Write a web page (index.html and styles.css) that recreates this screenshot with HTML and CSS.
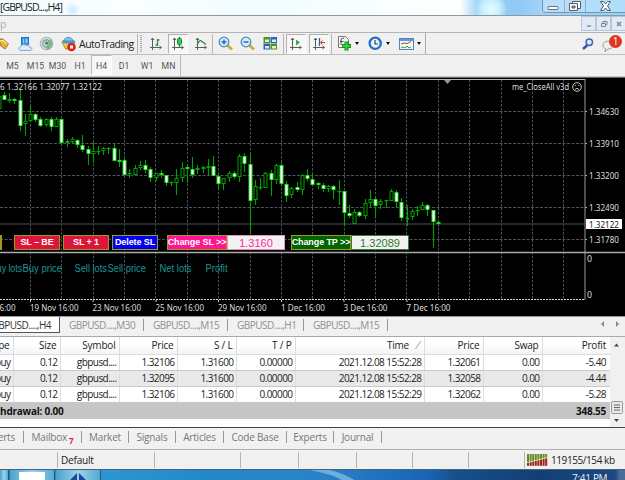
FILE: index.html
```html
<!DOCTYPE html>
<html lang="en">
<head>
  <meta charset="UTF-8">
  <meta name="viewport" content="width=device-width, initial-scale=1.0">
  <title>GBPUSD....,H4</title>
  <link rel="stylesheet" href="styles.css">
</head>
<body>

  <div class="titlebar">
    <span class="title">[GBPUSD....,H4]</span>
    <div class="window-buttons">
      <span><svg width="12" height="12"><rect x="1" y="3.5" width="10" height="3" rx="1" fill="#fff" stroke="#666b78"/></svg></span>
      <span><svg width="14" height="12"><path d="M4.500.500h8v7h-8z" fill="#fff" stroke="#555b68"/><path d="M1.500 2.500h8v7h-8z" fill="#fff" stroke="#555b68"/><path d="M4 5h3v2H4z" fill="#9ac" stroke="#555b68"/></svg></span>
      <span class="close"><svg width="13" height="12"><path d="M1.500.500h3l2 2.500 2-2.500h3L8.500 5l3 4.500h-3l-2-2.500-2 2.500h-3L4.500 5z" fill="#fff" stroke="#555b68"/></svg></span>
    </div>
  </div>

  <div class="menubar">
    <span class="menu-item">p</span>
    <div class="mdi-buttons">
      <span><svg width="8" height="8"><path d="M2 6h4" stroke="#74859b" stroke-width="1.300"/></svg></span>
      <span><svg width="8" height="8"><path d="M3 3V1.500h4v3H5.500M1.500 3.500h4v3h-4z" fill="none" stroke="#74859b"/></svg></span>
      <span><svg width="8" height="8"><path d="M2 2l4 4M6 2l-4 4" stroke="#74859b" stroke-width="1.400"/></svg></span>
    </div>
  </div>

  <div class="toolbar">
    <div class="tools">
      <svg class="icon gold" width="9" height="16"><path d="M0 3l3 0 5.500 5L5 13 0 9z" fill="#e9b03a" stroke="#a8741b"/><path d="M0 5l3-.5L7 8" fill="none" stroke="#ffe493" stroke-width="1.500"/></svg>
      <svg class="icon cloud" width="15" height="16"><rect x="3.500" y="1.500" width="7" height="8" fill="#2f96e3" stroke="#2878c1"/><path d="M5 4h1M7.500 4h2M5 6h1M7.500 6h2" stroke="#fff"/><path d="M3 14.500C0 14.500.500 10.500 3 10.500 4 8 7 8 8 9.500c2-1 3.500 0 3.500 1.500 3 0 3 3.500.5 3.500z" fill="#dce9f8" stroke="#84a6d6"/></svg>
      <svg class="icon signal" width="16" height="16"><circle cx="7.500" cy="7.500" r="6.300" fill="#d5dde2" stroke="#9db0ba"/><circle cx="7.500" cy="7.500" r="3.700" fill="none" stroke="#7394a5" stroke-width="1.200"/><path d="M7.500 7.500v6.500c4 0 6-3 6-6.500 0-2-1-4-2-4.500" fill="#76b37d" opacity=".8"/><circle cx="7.500" cy="7" r="1.600" fill="#2b9b3c"/></svg>
      <svg class="icon auto" width="17" height="16"><path d="M1 6l3.500 7 7 0L14 6z" fill="#f3c748" stroke="#bb8d20"/><ellipse cx="7.500" cy="5.500" rx="6.800" ry="2.200" fill="#4b9cd0"/><path d="M3 5c0-5 8.500-5 9 0z" fill="#7cc2ea" stroke="#3a86b8" stroke-width=".7"/><circle cx="10.500" cy="11" r="4.300" fill="#d92417"/><rect x="9" y="9.500" width="3" height="3" fill="#fff"/></svg>
      <span class="auto-label">AutoTrading</span>
      <i class="sep s1"></i><i class="grip"></i>
      <span class="tool t1"><svg width="14" height="14"><path class="ax" d="M3.500 1v12M1 10.500h11M2 3l1.500-2L5 3M10.500 9l2 1.500-2 1.500"/><path class="gr" d="M8.500 2v7M8.500 3h2M6.500 8h2"/></svg></span>
      <span class="tool t2 on"><svg width="14" height="14"><path class="ax" d="M3.500 1v12M1 10.500h11M2 3l1.500-2L5 3M10.500 9l2 1.500-2 1.500"/><path class="gr" d="M8.500 0v10"/><rect x="6.500" y="1.500" width="4" height="6" rx="1" fill="#2ecf4a" stroke="#168a2b"/></svg></span>
      <span class="tool t3"><svg width="14" height="14"><path class="ax" d="M3.500 1v12M1 10.500h11M2 3l1.500-2L5 3M10.500 9l2 1.500-2 1.500"/><path class="gr" d="M3 8c2-5 4-5 5-3.500l4 3"/></svg></span>
      <i class="sep s2"></i>
      <svg class="icon zin" width="16" height="16"><path d="M9 9l5 4.500" stroke="#d8a934" stroke-width="3"/><circle cx="6" cy="6" r="4.800" fill="#d5ecfb" stroke="#4b8cc9" stroke-width="1.300"/><path d="M3.500 6h5M6 3.500v5" stroke="#276fab" stroke-width="1.500"/></svg>
      <svg class="icon zout" width="16" height="16"><path d="M9 9l5 4.500" stroke="#d8a934" stroke-width="3"/><circle cx="6" cy="6" r="4.800" fill="#d5ecfb" stroke="#4b8cc9" stroke-width="1.300"/><path d="M3.500 6h5" stroke="#276fab" stroke-width="1.500"/></svg>
      <svg class="icon tile" width="15" height="15"><path d="M.5 1h6.500v6H.5zM7.500 7.500H14v6H7.500z" fill="#459721"/><path d="M7.500 1H14v6H7.500zM.5 7.500H7v6H.5z" fill="#2c63bd"/><path d="M2 3.500h4v2.500H2zM9 3.500h4v2.500H9zM2 10h4v2.500H2zM9 10h4v2.500H9z" fill="#e3f1dc"/></svg>
      <i class="sep s3"></i>
      <span class="tool t4 on"><svg width="14" height="14"><path class="ax" d="M3.500 1v12M1 10.500h11M2 3l1.500-2L5 3M10.500 9l2 1.500-2 1.500"/><path d="M7 2.500l4 3-4 3z" fill="#27b63f"/></svg></span>
      <span class="tool t5 on"><svg width="14" height="14"><path class="ax" d="M3.500 1v12M1 10.500h11M2 3l1.500-2L5 3M10.500 9l2 1.500-2 1.500"/><path d="M7.500 1v8" stroke="#2f6590" stroke-width="1.300"/><path d="M13 5.500H9M10.500 3.500l-2 2 2 2" fill="none" stroke="#c54120"/></svg></span>
      <i class="sep s4"></i>
      <svg class="icon newchart" width="15" height="17"><path d="M1.500 1.500h7l3 3v8h-10z" fill="#fafafa" stroke="#777"/><path d="M4 10V5c0-2 2-2 3-1.500M3 6.500h3.500" fill="none" stroke="#444"/><path d="M9.500 6.500v9M5 11h9" stroke="#168a1b" stroke-width="4"/><path d="M9.500 7.300v7.400M5.800 11h7.400" stroke="#35d23a" stroke-width="2"/></svg>
      <i class="arrow"></i>
      <svg class="icon clock" width="15" height="15"><circle cx="7.200" cy="7.300" r="5.600" fill="#e8f3fc" stroke="#2471c4" stroke-width="2.300"/><path d="M7 4v4h3" fill="none" stroke="#345" stroke-width="1.200"/></svg>
      <i class="arrow"></i>
      <svg class="icon tmpl" width="15" height="14"><rect x=".5" y="1.500" width="14" height="11" fill="#f4f8fb" stroke="#4d86bb"/><path d="M1 3h13" stroke="#5d9bd5" stroke-width="2"/><path d="M2 7l3-1 3 .5 4-2" fill="none" stroke="#b54729"/><path d="M2 11l2-1 2 1 2-2 2 2 2-1" fill="none" stroke="#3e9643"/></svg>
      <i class="arrow"></i>
    </div>
    <svg class="icon search" width="12" height="13"><path d="M5.500 7L1 11" stroke="#3457a5" stroke-width="2.500"/><circle cx="7.300" cy="4.300" r="3.200" fill="#dcebfa" stroke="#3d66b5" stroke-width="1.500"/></svg>
    <div class="alerts">
      <svg width="12" height="13"><path d="M1 5c0-5 10-5 10 0 0 3-3 4-5 4l-3 3 .5-3.500C2 8 1 7 1 5z" fill="#eee" stroke="#999"/></svg>
      <span class="badge">1</span>
    </div>
  </div>

  <div class="periods">
    <span class="m5">M5</span><span class="m15">M15</span><span class="m30">M30</span><span class="h1">H1</span><span class="h4 active">H4</span><span class="d1">D1</span><span class="w1">W1</span><span class="mn">MN</span>
  </div>

  <div class="chart-wrap">
    <svg id="chart" class="chart" width="625" height="240" viewBox="0 76 625 240"></svg>
    <div class="trade-buttons">
      <button class="stub"></button>
      <button class="red">SL – BE</button>
      <button class="red">SL + 1</button>
      <button class="blue">Delete SL</button>
      <button class="pink">Change SL &gt;&gt;</button>
      <span class="field pink-field">1.3160</span>
      <button class="green">Change TP &gt;&gt;</button>
      <span class="field green-field">1.32089</span>
    </div>
  </div>

  <div class="chart-tabs">
    <span class="tab active">GBPUSD....,H4</span>
    <span class="tab">GBPUSD....,M30</span>
    <span class="tab">GBPUSD....,M15</span>
    <span class="tab short">GBPUSD....,H1</span>
    <span class="tab">GBPUSD....,M15</span>
    <svg class="tab-scroll" width="20" height="8"><path d="M4 1v6L1 4zM16 1v6l3-3z" fill="#888"/></svg>
  </div>

  <div class="terminal">
    <table class="orders">
      <colgroup><col class="c-type"><col class="c-size"><col class="c-symbol"><col class="c-price"><col class="c-sl"><col class="c-tp"><col class="c-time"><col class="c-now"><col class="c-swap"><col class="c-profit"></colgroup>
      <thead>
        <tr><th>Type</th><th>Size</th><th>Symbol</th><th>Price</th><th>S / L</th><th>T / P</th><th class="time">Time <i>⁄</i></th><th>Price</th><th>Swap</th><th>Profit</th></tr>
      </thead>
      <tbody>
        <tr><td>buy</td><td>0.12</td><td>gbpusd....</td><td>1.32106</td><td>1.31600</td><td>0.00000</td><td>2021.12.08 15:52:28</td><td>1.32061</td><td>0.00</td><td>-5.40</td></tr>
        <tr class="odd"><td>buy</td><td>0.12</td><td>gbpusd....</td><td>1.32095</td><td>1.31600</td><td>0.00000</td><td>2021.12.08 15:52:28</td><td>1.32058</td><td>0.00</td><td>-4.44</td></tr>
        <tr><td>buy</td><td>0.12</td><td>gbpusd....</td><td>1.32106</td><td>1.31600</td><td>0.00000</td><td>2021.12.08 15:52:29</td><td>1.32062</td><td>0.00</td><td>-5.28</td></tr>
        <tr class="total"><td colspan="9"><span>thdrawal: 0.00</span></td><td>348.55</td></tr>
      </tbody>
    </table>
    <div class="scrollbar">
      <svg width="15" height="91"><path d="M4 9.500h5L6.500 6.500z" fill="#444"/><rect x="1.500" y="64.500" width="11" height="12" rx="1" fill="#e8e8e8" stroke="#999"/><path d="M4 68h6M4 70.500h6M4 73h6" stroke="#666"/><path d="M4 82h5l-2.500 3z" fill="#444"/></svg>
    </div>
  </div>

  <div class="terminal-tabs">
    <span class="alerts-tab">Alerts</span><span class="mail">Mailbox<sub>7</sub></span><span class="market">Market</span><span class="signals">Signals</span><span class="articles">Articles</span><span class="code">Code Base</span><span class="experts">Experts</span><span class="journal">Journal</span>
  </div>

  <div class="statusbar">
    <span class="st-a"></span><span class="st-b">Default</span><span class="st-c"></span><span class="st-d"></span><span class="st-d"></span><span class="st-e"></span><span class="st-e"></span><span class="st-f"></span>
    <div class="traffic">
      <svg id="bars" width="21" height="12"></svg>
      <span>119155/154 kb</span>
    </div>
  </div>

  <div class="taskbar">
    <span class="task first"></span>
    <span class="task"><i class="doc"></i></span>
    <span class="task"><svg width="20" height="8"><path d="M9 0v8H1zM11 0v8h8z" fill="#174a9c"/></svg></span>
    <svg class="wave" width="467" height="10"><path d="M202 -1Q232 4 241 11L254 11Q240 2 222 -1z" fill="#8fc0ea" opacity=".7"/></svg>
    <span class="time-now">7:41 PM</span>
  </div>

  <script src="chart.js"></script>
</body>
</html>
```

FILE: styles.css
```css
* {
  box-sizing: border-box;
}
body {
  margin: 0;
  width: 625px;
  height: 480px;
  overflow: hidden;
  background: #f0f0f0;
  font-family: "Open Sans", "Noto Sans", sans-serif;
  font-size: 10.5px;
  color: #222;
}
svg {
  display: block;
  flex: none;
}

/* title and menu */
.titlebar {
  display: flex;
  justify-content: space-between;
  height: 15px;
  background:
    radial-gradient(circle at 491px 9px, #e4fbff 0, #c7efff 9px, transparent 16px),
    radial-gradient(circle at 73px 10px, #cdeafd 0, transparent 8px),
    linear-gradient(90deg, #f3fcff 0, #fafeff 130px, #f0fdff 260px, #fff 460px, #a4d5f8 477px, #8fc9f5 515px, #a3d3fa 545px, #8ed4f7 625px);
}
.title {
  font-size: 10.5px;
  line-height: 14px;
  letter-spacing: -0.95px;
}
.window-buttons {
  display: flex;
  width: 83px;
  height: 13px;
  border: 1px solid #7495b4;
  border-top: 0;
  border-right: 0;
  border-radius: 0 0 0 4px;
}
.window-buttons span {
  display: flex;
  justify-content: center;
  width: 22px;
  padding-top: 1px;
  border-right: 1px solid #8fb0cd;
  background: rgba(220, 240, 255, 0.4);
}
.window-buttons span:first-child {
  padding-top: 3px;
}
.window-buttons .close {
  width: 39px;
  border: 0;
}
.menubar {
  display: flex;
  justify-content: space-between;
  height: 17px;
  border-top: 1px solid #8f979b;
  background: #f1f1f1;
}
.menu-item {
  color: #aaa;
  font-size: 10.5px;
  line-height: 16px;
}
.mdi-buttons {
  display: flex;
  width: 44px;
}
.mdi-buttons span {
  display: flex;
  align-items: center;
  justify-content: center;
  flex: none;
  width: 15px;
  height: 15px;
  border: 1px solid #b6c6d8;
  background: #dfeaf6;
}

/* toolbars */
.toolbar {
  display: flex;
  height: 23px;
  border-top: 1px solid #b4b4b4;
  border-bottom: 1px solid #bdbdbd;
}
.tools {
  display: flex;
  align-items: center;
  flex: none;
  width: 426px;
  height: 21px;
  border-right: 1px solid #aaa;
}
.cloud { margin-left: 9px; }
.signal { margin-left: 6px; }
.auto { margin-left: 6px; }
.auto-label {
  flex: none;
  width: 58px;
  margin-left: 1px;
  font-size: 10.5px;
  letter-spacing: -0.5px;
  white-space: nowrap;
}
.sep {
  flex: none;
  width: 1px;
  height: 20px;
  background: #b5b5b5;
}
.grip {
  flex: none;
  width: 2px;
  height: 18px;
  margin: 0 4px 0 2px;
  background: repeating-linear-gradient(#aaa 0 1px, #eee 1px 2px);
}
.tool {
  display: flex;
  align-items: center;
  justify-content: center;
  flex: none;
  width: 20px;
  height: 20px;
}
.tool.on {
  border: 1px solid #b1b1b1;
  border-right-color: #fff;
  border-bottom-color: #fff;
  background: #f7f7f7;
}
.t2 { margin-left: 2px; }
.t3 { margin-left: 3px; }
.t5 { margin-left: 3px; }
.ax {
  fill: none;
  stroke: #5c5c5c;
}
.gr {
  fill: none;
  stroke: #2d8c45;
  stroke-width: 1.3;
}
.s2 { margin-left: 1px; }
.zin { margin-left: 5px; }
.zout { margin-left: 6px; }
.tile { margin-left: 7px; }
.s3 { margin: 0 2px 0 5px; }
.s4 { margin: 0 5px 0 2px; }
.arrow {
  flex: none;
  width: 0;
  margin: 0 9px 0 3px;
  border: 2.5px solid transparent;
  border-top: 3px solid #111;
  border-bottom: 0;
}
.tmpl + .arrow { margin-right: 0; }
.search { margin: 5px 0 0 156px; }
.alerts {
  position: relative;
  margin: 7px 0 0 8px;
}
.badge {
  position: absolute;
  left: 7px;
  top: -5px;
  width: 13px;
  height: 13px;
  border-radius: 50%;
  background: #dc3520;
  color: #fff;
  font-size: 10px;
  line-height: 13px;
  text-align: center;
}
.periods {
  display: flex;
  width: 181px;
  height: 21px;
  border-right: 1px solid #bbb;
  font-family: Roboto, sans-serif;
  font-size: 8.7px;
  line-height: 22px;
  color: #555;
  text-align: center;
}
.periods span { flex: none; }
.m5 { width: 25px; }
.m15 { width: 21px; }
.m30 { width: 23px; }
.h1 { width: 22px; }
.h4 { width: 21px; }
.d1 { width: 24px; }
.w1 { width: 22px; }
.mn { width: 21px; }
.periods .active {
  height: 20px;
  border: 1px solid #bbb;
  border-right-color: #fff;
  border-bottom-color: #fff;
  background: #f8f8f8;
  line-height: 20px;
}

/* chart */
.chart-wrap {
  position: relative;
  height: 240px;
  background: #000;
}
.chart text {
  font-family: "Noto Sans", sans-serif;
  font-size: 9px;
  fill: #ddd;
}
.chart .teal {
  font-family: "Liberation Sans", sans-serif;
  font-size: 10px;
  fill: #1f9595;
}
.chart .now { fill: #111; }
.trade-buttons {
  position: absolute;
  left: 0;
  top: 159px;
  display: flex;
  height: 15px;
}
.trade-buttons button {
  flex: none;
  display: flex;
  align-items: center;
  justify-content: center;
  height: 15px;
  padding: 0;
  border: 1px solid #a09a18;
  color: #fff;
  font: 9px/13px "Liberation Sans", sans-serif;
  font-weight: bold;
  letter-spacing: -0.1px;
  white-space: nowrap;
  overflow: hidden;
}
.trade-buttons .stub { width: 1px; margin-right: 12px; }
.trade-buttons .red { width: 46px; margin-right: 3px; background: #dc143c; }
.trade-buttons .blue { width: 46px; margin-right: 9px; background: #0000f5; }
.trade-buttons .pink { width: 60px; background: #ff1493; }
.trade-buttons .green { width: 60px; margin-left: 6px; background: #006400; }
.field {
  width: 58px;
  border: 1px solid #f08cc4;
  background: #f2f2f2;
  font: 11px/14px "Liberation Sans", sans-serif;
  text-align: center;
}
.pink-field { color: #ff2a9d; }
.green-field { border-color: #3c7d3c; color: #2e7a2e; }

/* chart tabs */
.chart-tabs {
  display: flex;
  align-items: flex-start;
  height: 20px;
  border-top: 1px solid #999;
  background: #f1f1f1;
}
.tab {
  flex: none;
  position: relative;
  width: 84px;
  padding-left: 9px;
  color: #909090;
  font-size: 10px;
  line-height: 16px;
  letter-spacing: -0.5px;
  white-space: nowrap;
}
.tab:not(.active)::after {
  content: "";
  position: absolute;
  right: 0;
  top: 2px;
  width: 1px;
  height: 12px;
  background: #999;
}
.tab.short { width: 76px; }
.tab.active {
  display: flex;
  justify-content: flex-end;
  width: 60px;
  height: 16px;
  padding: 0 8px 0 0;
  border-right: 1px solid #555;
  border-bottom: 1px solid #555;
  background: #fff;
  color: #333;
}
.tab-scroll { margin: 3px 5px 0 auto; }

/* terminal */
.terminal {
  display: flex;
  height: 92px;
  background: #fff;
  border-top: 1px solid #aaa;
  border-bottom: 1px solid #444;
}
.orders {
  width: 610px;
  height: 82px;
  table-layout: fixed;
  border-collapse: collapse;
  font-size: 10px;
  letter-spacing: -0.55px;
  line-height: 15px;
}
.c-type { width: 13px; }
.c-size { width: 47px; }
.c-symbol { width: 59px; }
.c-price { width: 58px; }
.c-sl { width: 59px; }
.c-tp { width: 59px; }
.c-time { width: 129px; }
.c-now { width: 59px; }
.c-swap { width: 59px; }
.c-profit { width: 68px; }
.orders th, .orders td {
  height: 16px;
  padding: 0 2px 0 0;
  border-right: 1px solid #ddd;
  border-bottom: 1px solid #c8c8c8;
  font-weight: normal;
  text-align: right;
  white-space: nowrap;
}
.orders th {
  height: 17px;
  padding-right: 3px;
  background: linear-gradient(#fff 40%, #f2f4f6);
  border-bottom-color: #ddd;
  letter-spacing: -0.2px;
}
.orders td:first-child, .orders th:first-child {
  direction: rtl;
  overflow: hidden;
}
.orders th:last-child, .orders td:last-child {
  padding-right: 4px;
  border-right: 0;
}
.orders .time { padding-right: 5px; }
.orders .time i { color: #888; margin-left: 6px; }
.orders .odd { background: #e9e9e9; }
.orders .total td {
  background: #c6c6c6;
  border: 0;
  font-weight: bold;
  letter-spacing: -0.25px;
  color: #111;
}
.orders .total td:first-child {
  direction: ltr;
  text-align: left;
}
.total span { margin-left: -4px; }
.scrollbar {
  width: 15px;
  background: #f0f0f0;
}
.terminal-tabs {
  display: flex;
  align-items: center;
  height: 18px;
  margin-bottom: 3px;
  background: #f1f1f1;
  color: #777;
  font-size: 10px;
  letter-spacing: -0.2px;
  line-height: 12px;
  white-space: nowrap;
}
.terminal-tabs span {
  flex: none;
  height: 12px;
  border-right: 1px solid #999;
  text-align: center;
}
.terminal-tabs .alerts-tab {
  display: flex;
  justify-content: flex-end;
  width: 24px;
  padding-right: 8px;
}
.mail { width: 58px; }
.mail sub {
  margin-left: 2px;
  color: #e02030;
  font-size: 8px;
  font-weight: bold;
  line-height: 0;
}
.market { width: 47px; }
.signals { width: 47px; }
.articles { width: 48px; }
.code { width: 63px; }
.experts { width: 47px; }
.journal { width: 48px; }
.statusbar {
  display: flex;
  height: 20px;
  padding-top: 2px;
  border-top: 1px solid #b2b2b2;
  background: #f0f0f0;
  font-size: 10px;
  line-height: 17px;
  letter-spacing: -0.2px;
}
.statusbar > span {
  flex: none;
  height: 16px;
  border-right: 1px solid #b5b5b5;
}
.st-a { width: 58px; }
.st-b { width: 97px; padding-left: 3px; }
.st-c { width: 86px; }
.st-d { width: 58px; }
.st-e { width: 56px; }
.st-f { width: 56px; }
.traffic {
  display: flex;
  align-items: center;
  gap: 3px;
  padding-left: 2px;
  height: 16px;
  white-space: nowrap;
  letter-spacing: -0.42px;
}

/* taskbar */
.taskbar {
  display: flex;
  height: 11px;
  border-top: 1px solid #42667e;
  background: linear-gradient(90deg, #2675b8 0, #2f95ce 110px, #2389c8 200px, #2a82c8 320px, #1963b3 430px, #174f8b 455px, #123f73 540px, #1b4980 615px, #4a6e98 620px);
}
.task {
  display: flex;
  justify-content: center;
  flex: none;
  width: 45px;
  margin-right: 1px;
  border-right: 1px solid #235a7e;
  background: linear-gradient(90deg, #4ba3cc, #9ad2e7 50%, #56a9d2);
}
.task.first { width: 9px; }
.task svg { margin-top: 3px; }
.doc {
  width: 26px;
  margin-top: 2px;
  background: #fff;
}
.time-now {
  margin-left: 3px;
  color: #e8eef5;
  font-size: 10px;
  line-height: 17px;
  letter-spacing: -0.3px;
  white-space: nowrap;
}
```

FILE: chart.js
```js
const svg = document.getElementById('chart');
let out = '';

function line(x1, y1, x2, y2, color, extra = '') {
  out += `<path d="M${x1} ${y1}L${x2} ${y2}" stroke="${color}" ${extra}/>`;
}
function label(text, x, y, width, cls = '') {
  out += `<text x="${x}" y="${y}" textLength="${width}" lengthAdjust="spacingAndGlyphs" class="${cls}">${text}</text>`;
}

// grid
out += '<rect x="0" y="76" width="625" height="1.5" fill="#c5c8c8"/>';
for (let i = 0; i < 18; i++) {
  const x = Math.round(30 + i * 31.37) + 0.5;
  line(x, 80, x, 299, '#4a535e', 'stroke-dasharray="2.5 1.5"');
}
[111.5, 143.5, 175.5, 207.5, 239.5].forEach(y => line(0, y, 584, y, '#4a535e', 'stroke-dasharray="3 1.5"'));
line(0, 224, 584, 224, '#30383d', 'stroke-width="1.6"');

// high, body top, body bottom, low, w = white body / g = hollow
const candles = [
  [95, 96, 109, 109, 'g'], [92, 95, 100, 100, 'w'], [93, 99, 101, 103, 'g'], [98, 99, 101, 104, 'w'],
  [90, 100, 126, 131, 'w'], [114, 121, 124, 136, 'g'], [106, 114, 121, 122, 'g'], [113, 114, 120, 122, 'w'],
  [117, 119, 126, 127, 'w'], [118, 119, 125, 127, 'g'], [117, 119, 127, 131, 'w'], [117, 119, 127, 127, 'g'],
  [119, 119, 143, 144, 'w'], [139, 141, 143, 147, 'g'], [137, 139, 142, 144, 'g'], [139, 140, 145, 148, 'w'],
  [135, 145, 150, 152, 'w'], [146, 149, 154, 165, 'w'], [142, 151, 154, 163, 'g'], [146, 151, 152, 155, 'g'],
  [147, 148, 151, 155, 'g'], [147, 148, 149, 154, 'g'], [143, 148, 161, 161, 'w'], [149, 160, 162, 167, 'w'],
  [158, 160, 175, 176, 'w'], [169, 173, 174, 178, 'g'], [165, 168, 175, 175, 'g'], [161, 165, 168, 170, 'g'],
  [160, 165, 170, 173, 'w'], [167, 169, 178, 182, 'w'], [173, 173, 178, 181, 'g'], [170, 173, 175, 178, 'w'],
  [175, 175, 183, 186, 'w'], [181, 182, 183, 186, 'g'], [169, 178, 183, 195, 'g'], [162, 168, 178, 182, 'g'],
  [165, 167, 169, 183, 'w'], [157, 169, 175, 178, 'w'], [165, 168, 170, 174, 'g'], [166, 167, 169, 173, 'g'],
  [159, 166, 168, 176, 'g'], [156, 166, 176, 176, 'w'], [174, 176, 184, 190, 'w'], [178, 178, 184, 190, 'g'],
  [171, 173, 178, 182, 'g'], [171, 173, 177, 179, 'w'], [154, 156, 177, 182, 'g'], [153, 156, 164, 172, 'w'],
  [154, 164, 201, 234, 'w'], [180, 186, 200, 205, 'g'], [178, 187, 188, 190, 'g'], [172, 173, 188, 188, 'g'],
  [170, 173, 180, 196, 'w'], [164, 165, 180, 184, 'g'], [161, 165, 184, 186, 'w'], [181, 184, 196, 202, 'w'],
  [187, 188, 195, 198, 'g'], [182, 187, 190, 192, 'w'], [174, 175, 190, 195, 'g'], [169, 175, 179, 181, 'w'],
  [174, 179, 185, 186, 'w'], [182, 183, 185, 189, 'w'], [183, 185, 189, 192, 'w'], [185, 186, 189, 192, 'g'],
  [185, 186, 190, 199, 'w'], [180, 191, 192, 205, 'g'], [191, 191, 213, 226, 'w'], [205, 213, 216, 218, 'w'],
  [209, 212, 224, 224, 'g'], [211, 212, 216, 217, 'w'], [199, 203, 216, 219, 'g'], [190, 199, 203, 208, 'g'],
  [197, 199, 206, 218, 'w'], [199, 201, 205, 209, 'g'], [200, 200, 201, 208, 'g'], [189, 191, 201, 201, 'g'],
  [190, 192, 202, 208, 'w'], [198, 202, 218, 221, 'w'], [205, 218, 219, 226, 'g'], [209, 211, 217, 220, 'g'],
  [206, 210, 211, 216, 'g'], [202, 205, 210, 210, 'g'], [204, 205, 210, 216, 'w'], [210, 210, 222, 248, 'w'],
  [220, 222, 224, 226, 'w']
];
candles.forEach((c, i) => {
  const x = Math.round(-1.4 + i * 5.23) + 0.5;
  const [high, top, bottom, low, kind] = c;
  line(x, high, x, low, '#00a000', 'stroke-width="1.1"');
  const fill = kind === 'w' ? '#fff' : '#000';
  const stroke = kind === 'w' ? '#20dd20' : '#00a400';
  out += `<rect x="${x - 1.5}" y="${top + 0.5}" width="3" height="${Math.max(bottom - top - 1, 0.3)}" fill="${fill}" stroke="${stroke}"/>`;
});

// frame and separators
line(0, 79.5, 585, 79.5, '#b5b5b5');
line(585, 79, 585, 300, '#999');
line(0, 252.5, 625, 252.5, '#aaa', 'stroke-width="1.600"');
line(0, 299.5, 585, 299.5, '#ddd', 'stroke-dasharray="2 1"');
out += '<path d="M444 80h7l-3.5 4z" fill="#8796a8"/>';

// prices
[['1.34630', 111], ['1.33910', 143], ['1.33200', 175], ['1.32490', 207], ['1.31780', 239]].forEach(p => {
  line(585, p[1] + 0.5, 587, p[1] + 0.5, '#aaa');
  label(p[0], 589, p[1] + 4, 30);
});
out += '<rect x="586" y="219" width="36" height="10" fill="#fff"/>';
label('1.32122', 589, 227.500, 30, 'now');
label('0', 587, 262, 5);
label('0', 587, 298, 5);

// captions
label('6 1.32166 1.32077 1.32122', 0, 89.500, 102);
label('me_CloseAll v3d', 512, 90, 57);
out += '<g fill="none" stroke="#ddd" stroke-width=".9"><circle cx="577" cy="87" r="4.300"/><path d="M575 89.500q2-2.500 4 0M575.300 85v1M578.700 85v1"/></g>';
label('Buy lots', -9, 272, 31, 'teal');
label('Buy price', 22.5, 272, 39.5, 'teal');
label('Sell lots', 74.5, 272, 32.5, 'teal');
label('Sell price', 107.5, 272, 38.5, 'teal');
label('Net lots', 159.5, 272, 32, 'teal');
label('Profit', 205.5, 272, 22, 'teal');

// dates
label('16:00', -5, 310.500, 20.5);
[['19 Nov 16:00', 30, 48.5], ['23 Nov 16:00', 92.5, 48.5], ['25 Nov 16:00', 155.5, 48.5], ['29 Nov 16:00', 218, 48.5],
 ['1 Dec 16:00', 281, 44], ['3 Dec 16:00', 343.5, 44], ['7 Dec 16:00', 406.5, 44]].forEach(d => {
  line(d[1] + 0.5, 300, d[1] + 0.5, 302, '#ccc');
  label(d[0], d[1], 310.5, d[2]);
});
svg.innerHTML = out;

// connection bars
let bars = '';
for (let i = 0; i < 8; i++) {
  const split = 8 - i * 0.65;
  bars += `<rect x="${i * 2.6}" y="0" width="2" height="${split}" fill="#648a1c"/><rect x="${i * 2.6}" y="${split + 0.8}" width="2" height="${11 - split}" fill="#9e2416"/>`;
}
document.getElementById('bars').innerHTML = bars;
```
